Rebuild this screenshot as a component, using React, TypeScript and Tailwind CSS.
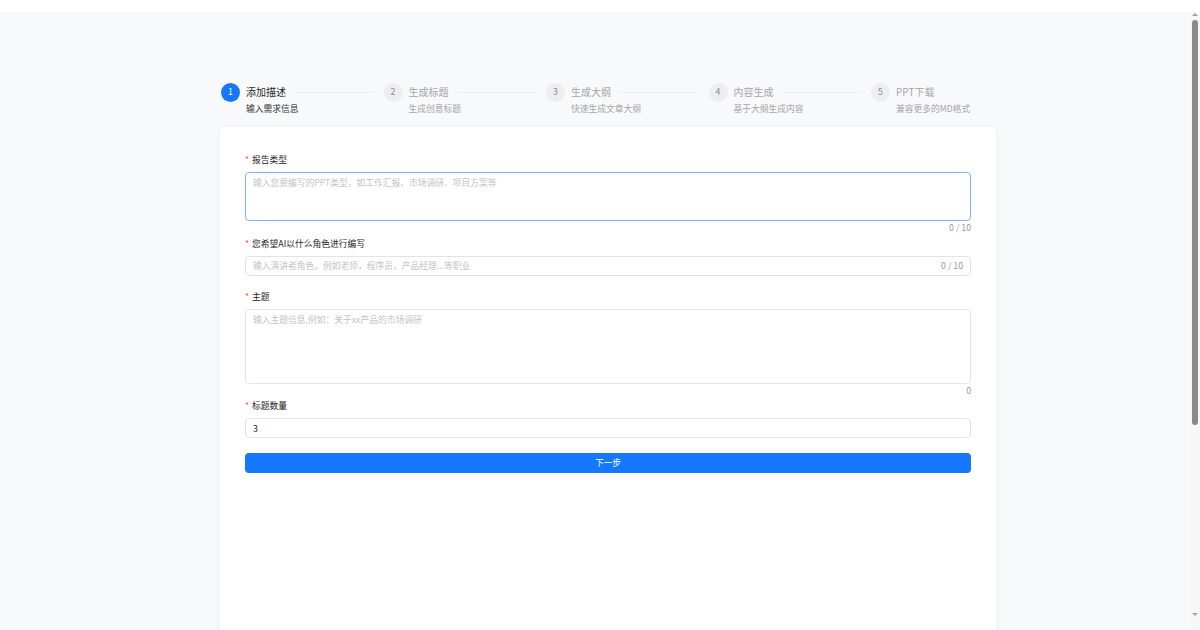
import type { ReactNode } from 'react'

const steps = [
  { title: '添加描述', desc: '输入需求信息' },
  { title: '生成标题', desc: '生成创意标题' },
  { title: '生成大纲', desc: '快速生成文章大纲' },
  { title: '内容生成', desc: '基于大纲生成内容' },
  { title: 'PPT下载', desc: '兼容更多的MD格式' },
]

const current = 0

function Steps() {
  return (
    <div className="flex w-[750px] ml-[221px] mt-[70px]">
      {steps.map((step, i) => {
        const active = i === current
        const last = i === steps.length - 1
        return (
          <div key={step.title} className={last ? 'flex w-[100px] shrink-0' : 'flex flex-1 min-w-0 overflow-hidden pr-[10px]'}>
            <div
              className={
                active
                  ? 'mt-[0.5px] flex h-[19px] w-[19px] shrink-0 items-center justify-center rounded-full bg-[#1677ff] text-[8.75px] leading-none text-white'
                  : 'mt-[0.5px] flex h-[19px] w-[19px] shrink-0 items-center justify-center rounded-full bg-[#eceef1] text-[8.75px] leading-none text-[#8c8c8c]'
              }
            >
              {i + 1}
            </div>
            <div className="ml-[6px] flex min-w-0 flex-1 flex-col">
              <div className="flex items-center h-[20px]">
                <span className={active ? 'text-[10px] leading-[20px] text-[#262626] whitespace-nowrap' : 'text-[10px] leading-[20px] text-[#a6a6a6] whitespace-nowrap'}>
                  {step.title}
                </span>
                {!last && <div className="ml-[8px] h-px flex-1 bg-[#ebedf0]" />}
              </div>
              <div className={active ? 'text-[8.75px] leading-[14px] text-[#333] whitespace-nowrap' : 'text-[8.75px] leading-[14px] text-[#a6a6a6] whitespace-nowrap'}>
                {step.desc}
              </div>
            </div>
          </div>
        )
      })}
    </div>
  )
}

function Label({ children }: { children: ReactNode }) {
  return (
    <div className="flex h-[20px] items-start pt-[1px] text-[8.75px] leading-[14px] text-[#262626]">
      <span className="mr-[3px] text-[#ff4d4f]">*</span>
      {children}
    </div>
  )
}

function Count({ children, tall }: { children: ReactNode; tall?: boolean }) {
  return (
    <div className={tall ? 'h-[15px] text-right text-[8.75px] leading-[14px] text-[#9a9a9a]' : 'h-[14px] text-right text-[8.75px] leading-[14px] text-[#9a9a9a]'}>
      {children}
    </div>
  )
}

export default function App() {
  return (
    <div className="flex h-[630px] w-[1200px] flex-col overflow-hidden bg-white font-['Noto_Sans_CJK_SC',sans-serif]">
      <div className="h-[12px] shrink-0 bg-white" />
      <div className="flex min-h-0 flex-1">
        <main className="min-w-0 flex-1 overflow-hidden bg-[#f8f9fb]">
          <Steps />

          <section className="ml-[220px] mt-[11px] h-[560px] w-[776px] rounded-t-[6px] bg-white px-[25px] pt-[25px] shadow-[0_1px_6px_rgba(0,0,0,0.06)]">
            <Label>报告类型</Label>
            <textarea
              readOnly
              placeholder="输入您要编写的PPT类型，如工作汇报、市场调研、项目方案等"
              className="block h-[49px] w-full resize-none rounded-[4px] border border-[#7fb2f5] px-[7px] py-[3px] text-[8.75px] leading-[14px] outline-none placeholder:text-[#c4c4c4]"
            />
            <Count tall>0 / 10</Count>

            <Label>您希望AI以什么角色进行编写</Label>
            <div className="flex h-[20px] items-center rounded-[4px] border border-[#e3e3e3] px-[7px]">
              <input
                readOnly
                placeholder="输入演讲者角色，例如老师，程序员，产品经理...等职业"
                className="min-w-0 flex-1 bg-transparent text-[8.75px] leading-[14px] outline-none placeholder:text-[#c4c4c4]"
              />
              <span className="text-[8.75px] leading-[14px] text-[#9a9a9a]">0 / 10</span>
            </div>
            <div className="h-[13px]" />

            <Label>主题</Label>
            <textarea
              readOnly
              placeholder="输入主题信息,例如：关于xx产品的市场调研"
              className="block h-[75px] w-full resize-none rounded-[4px] border border-[#e6e6e6] px-[7px] py-[3px] text-[8.75px] leading-[14px] outline-none placeholder:text-[#c4c4c4]"
            />
            <Count>0</Count>

            <Label>标题数量</Label>
            <input
              readOnly
              value="3"
              className="block h-[20px] w-full rounded-[4px] border border-[#e3e3e3] px-[7px] text-[8.75px] leading-[14px] text-[#262626] outline-none"
            />

            <button className="mt-[15px] flex h-[20px] w-full items-center justify-center rounded-[4px] bg-[#1677ff] text-[8.75px] leading-none text-white">
              下一步
            </button>
          </section>
        </main>

        {/* page scrollbar */}
        <div className="flex w-[10px] shrink-0 flex-col items-center bg-[#f7f7f7]">
          <div className="mt-[1px] h-0 w-0 border-x-[3px] border-b-[3px] border-x-transparent border-b-[#a3a3a3]" />
          <div className="mt-[4px] h-[405px] w-[6px] rounded-full bg-[#8a8a8a]" />
          <div className="flex-1" />
          <div className="mb-[14px] h-0 w-0 border-x-[3px] border-t-[3px] border-x-transparent border-t-[#a3a3a3]" />
        </div>
      </div>
    </div>
  )
}
